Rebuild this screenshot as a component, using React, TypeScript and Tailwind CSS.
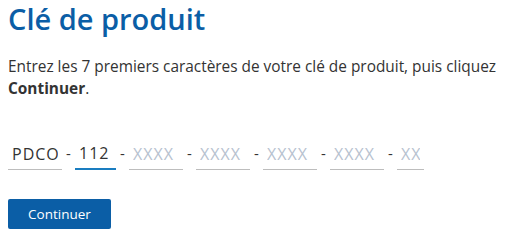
import React from "react";

const font = { fontFamily: '"Open Sans", "Noto Sans", sans-serif' };

function Dash() {
  return <span className="w-[13px] pb-[2px] text-center text-[15px] leading-none text-[#333]">-</span>;
}

function Field({ w, value, placeholder, active }: { w: string; value?: string; placeholder: string; active?: boolean }) {
  return (
    <div className={`${w} flex h-[32px] items-center ${active ? "border-b-2 border-[#1a7dc0]" : "border-b border-[#bdbdbd]"}`}>
      <input
        defaultValue={value}
        placeholder={placeholder}
        autoFocus={active}
        className="w-full bg-transparent px-[4px] text-[16px] tracking-[1px] text-[#333] caret-[#333] outline-none placeholder:text-[#b7c2d0]"
        style={font}
      />
    </div>
  );
}

export default function App() {
  return (
    <div className="bg-white w-[508px] h-[239px] pl-[8px] pt-[0px]" style={font}>
      <h1 className="text-[29px] font-semibold leading-[38px] text-[#0b5ea6]">Clé de produit</h1>
      <p className="mt-[18px] text-[15.4px] leading-[22px] text-[#333]">
        Entrez les 7 premiers caractères de votre clé de produit, puis cliquez <b className="font-bold">Continuer</b>.
      </p>
      <div className="mt-[38px] flex items-center">
        <Field w="w-[54px]" value="PDCO" placeholder="" />
        <Dash />
        <Field w="w-[41px]" value="112" placeholder="" active />
        <Dash />
        <Field w="w-[54px]" placeholder="XXXX" />
        <Dash />
        <Field w="w-[54px]" placeholder="XXXX" />
        <Dash />
        <Field w="w-[54px]" placeholder="XXXX" />
        <Dash />
        <Field w="w-[54px]" placeholder="XXXX" />
        <Dash />
        <Field w="w-[27px]" placeholder="XX" />
      </div>
      <button className="mt-[29px] h-[30px] w-[103px] rounded-[2px] bg-[#0b5ea6] text-[13.5px] text-white" style={font}>
        Continuer
      </button>
    </div>
  );
}
